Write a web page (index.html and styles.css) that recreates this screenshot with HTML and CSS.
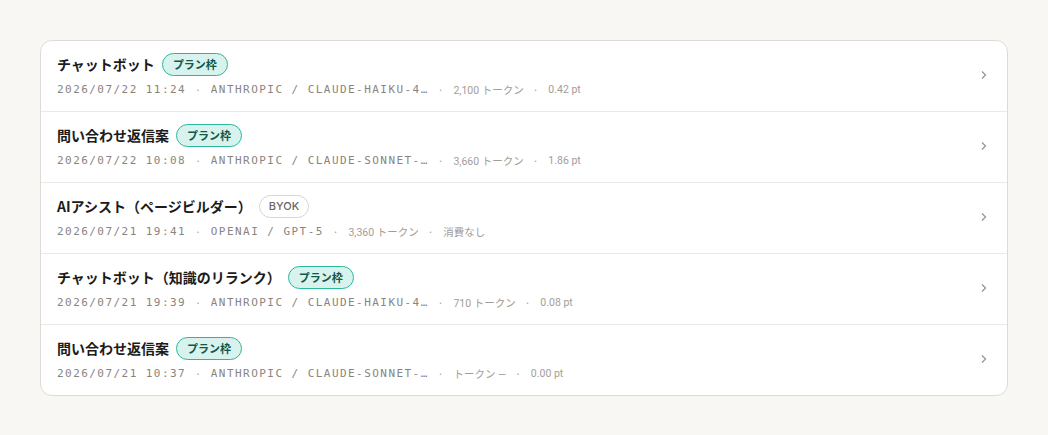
FILE: index.html
```html
<!DOCTYPE html>
<html lang="ja">
<head>
<meta charset="utf-8">
<link rel="stylesheet" href="styles.css">
</head>
<body>
<div class="card">
  <div class="row">
    <div class="main">
      <div class="title-line"><span class="title">チャットボット</span><span class="badge plan">プラン枠</span></div>
      <div class="meta"><span class="mono">2026/07/22 11:24</span><span class="sep">·</span><span class="mono model">ANTHROPIC / CLAUDE-HAIKU-4-5-20251001</span><span class="sep">·</span><span class="small">2,100 トークン</span><span class="sep">·</span><span class="small">0.42 pt</span></div>
    </div>
    <svg class="chev" viewBox="0 0 10 10" width="10" height="10"><path d="M3 1.5 L6.5 5 L3 8.5" fill="none" stroke="#9a958f" stroke-width="1.3"/></svg>
  </div>
  <div class="row">
    <div class="main">
      <div class="title-line"><span class="title">問い合わせ返信案</span><span class="badge plan">プラン枠</span></div>
      <div class="meta"><span class="mono">2026/07/22 10:08</span><span class="sep">·</span><span class="mono model">ANTHROPIC / CLAUDE-SONNET-4-5</span><span class="sep">·</span><span class="small">3,660 トークン</span><span class="sep">·</span><span class="small">1.86 pt</span></div>
    </div>
    <svg class="chev" viewBox="0 0 10 10" width="10" height="10"><path d="M3 1.5 L6.5 5 L3 8.5" fill="none" stroke="#9a958f" stroke-width="1.3"/></svg>
  </div>
  <div class="row">
    <div class="main">
      <div class="title-line"><span class="title">AIアシスト（ページビルダー）</span><span class="badge byok">BYOK</span></div>
      <div class="meta"><span class="mono">2026/07/21 19:41</span><span class="sep">·</span><span class="mono model">OPENAI / GPT-5</span><span class="sep">·</span><span class="small">3,360 トークン</span><span class="sep">·</span><span class="small">消費なし</span></div>
    </div>
    <svg class="chev" viewBox="0 0 10 10" width="10" height="10"><path d="M3 1.5 L6.5 5 L3 8.5" fill="none" stroke="#9a958f" stroke-width="1.3"/></svg>
  </div>
  <div class="row">
    <div class="main">
      <div class="title-line"><span class="title">チャットボット（知識のリランク）</span><span class="badge plan">プラン枠</span></div>
      <div class="meta"><span class="mono">2026/07/21 19:39</span><span class="sep">·</span><span class="mono model">ANTHROPIC / CLAUDE-HAIKU-4-5-20251001</span><span class="sep">·</span><span class="small">710 トークン</span><span class="sep">·</span><span class="small">0.08 pt</span></div>
    </div>
    <svg class="chev" viewBox="0 0 10 10" width="10" height="10"><path d="M3 1.5 L6.5 5 L3 8.5" fill="none" stroke="#9a958f" stroke-width="1.3"/></svg>
  </div>
  <div class="row">
    <div class="main">
      <div class="title-line"><span class="title">問い合わせ返信案</span><span class="badge plan">プラン枠</span></div>
      <div class="meta"><span class="mono">2026/07/21 10:37</span><span class="sep">·</span><span class="mono model">ANTHROPIC / CLAUDE-SONNET-4-5</span><span class="sep">·</span><span class="small">トークン —</span><span class="sep">·</span><span class="small">0.00 pt</span></div>
    </div>
    <svg class="chev" viewBox="0 0 10 10" width="10" height="10"><path d="M3 1.5 L6.5 5 L3 8.5" fill="none" stroke="#9a958f" stroke-width="1.3"/></svg>
  </div>
</div>
</body>
</html>
```
FILE: styles.css
```css
html, body {
  margin: 0;
  padding: 0;
  background: #f8f7f4;
}
body {
  padding: 40px;
  font-family: "Noto Sans CJK JP", "Noto Sans", sans-serif;
  color: #1c1b1a;
}
.card {
  background: #ffffff;
  border: 1px solid #dedbd6;
  border-radius: 12px;
  overflow: hidden;
}
.row {
  display: flex;
  align-items: center;
  padding: 12px 18px 14px 16px;
  border-bottom: 1px solid #ece9e5;
}
.row:last-child {
  border-bottom: none;
}
.main {
  flex: 1;
  min-width: 0;
}
.title-line {
  display: flex;
  align-items: center;
  gap: 7px;
  height: 22px;
}
.title {
  font-size: 14px;
  font-weight: 700;
  line-height: 22px;
  color: #1c1b1a;
}
.badge {
  display: inline-flex;
  align-items: center;
  height: 23px;
  padding: 0 10px;
  border-radius: 12px;
  font-size: 11px;
  font-weight: 700;
  box-sizing: border-box;
}
.plan {
  background: #d8f3ee;
  border: 1px solid #2bb79c;
  color: #10584a;
}
.byok {
  background: #ffffff;
  border: 1px solid #d9d6d1;
  color: #6b6661;
  font-family: "Inter", "Noto Sans", sans-serif;
  font-weight: 500;
  padding: 0 9px;
}
.meta {
  display: flex;
  align-items: center;
  height: 16px;
  margin-top: 6px;
  white-space: nowrap;
}
.mono {
  font-family: "DejaVu Sans Mono", monospace;
  font-size: 11px;
  letter-spacing: 1.45px;
  color: #8a847e;
}
.model {
  max-width: 218px;
  overflow: hidden;
  text-overflow: ellipsis;
  white-space: nowrap;
}
.sep {
  font-size: 10px;
  color: #a39d97;
  margin: 0 10px 0 9px;
}
.small {
  font-family: "Roboto", "Noto Sans CJK JP", sans-serif;
  font-size: 10.5px;
  color: #a39d97;
}
.chev {
  flex: none;
  margin-left: 12px;
}
```
